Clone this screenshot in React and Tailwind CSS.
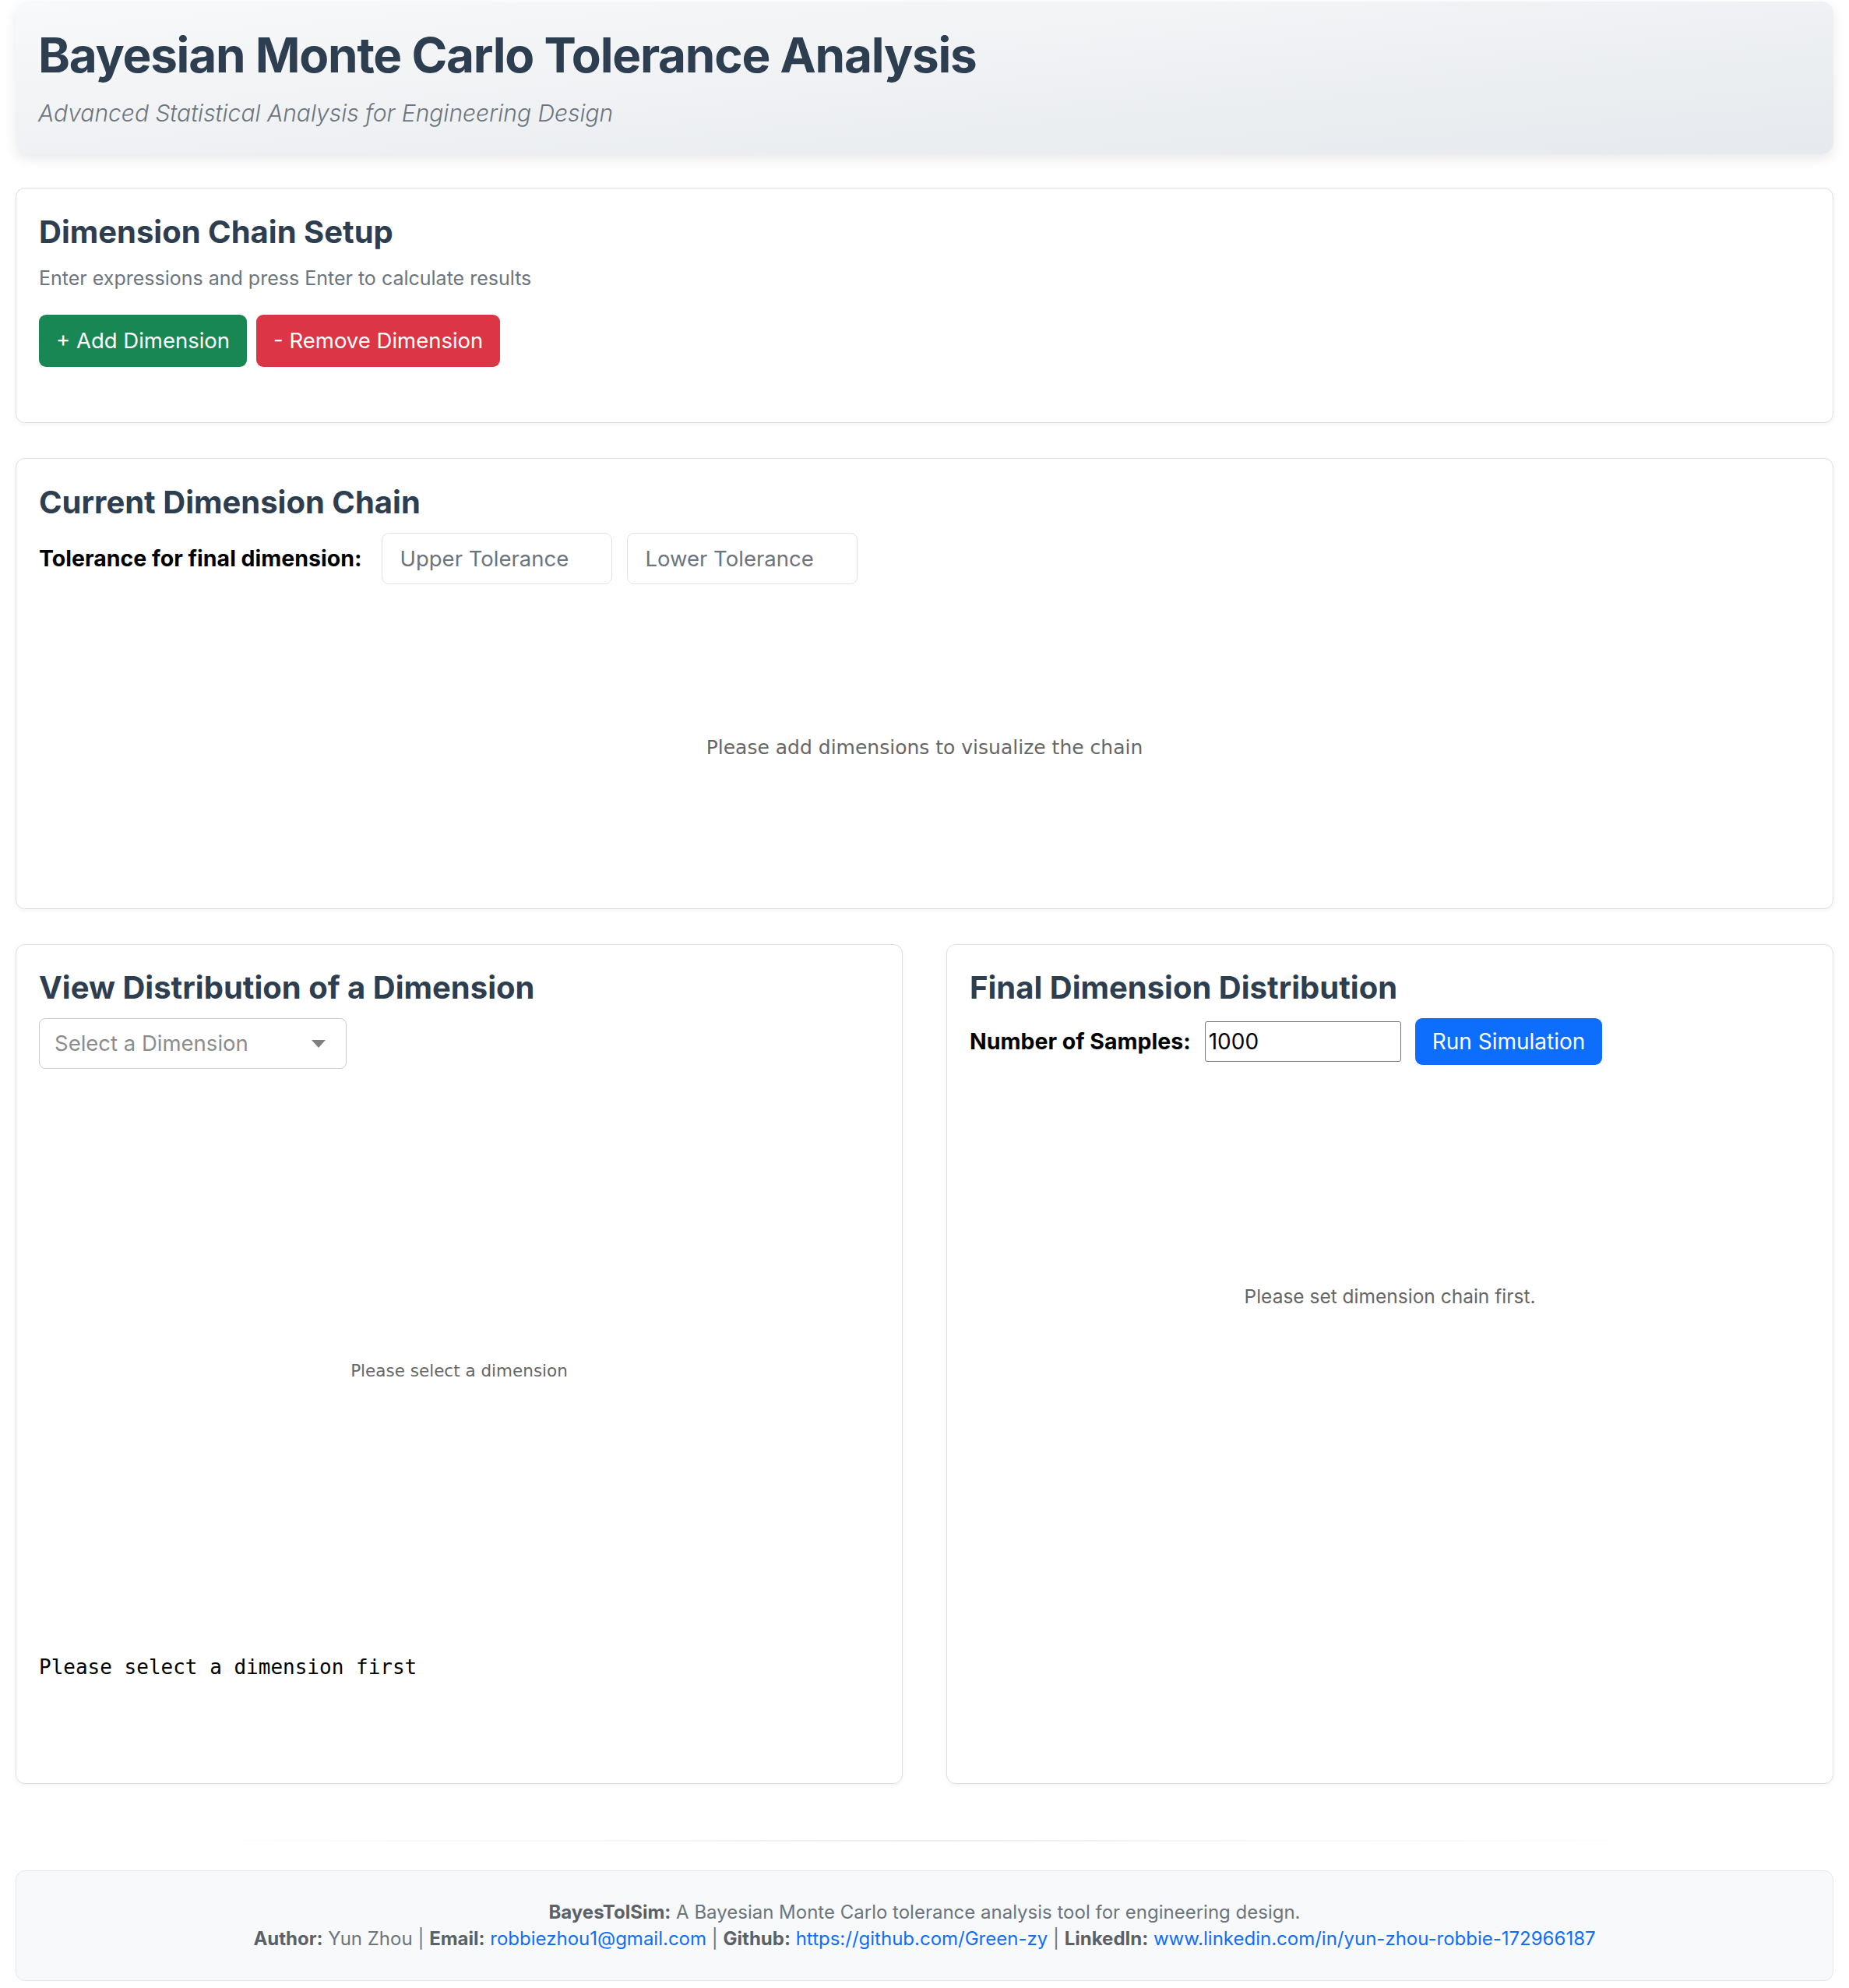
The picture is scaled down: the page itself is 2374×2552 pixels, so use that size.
import { useState } from 'react';

const font = { fontFamily: 'Inter, "Noto Sans", sans-serif' };

function Card({ className = '', children }) {
  return (
    <div className={`bg-white border border-[#dcdfe3] rounded-[12px] shadow-[0_2px_6px_rgba(0,0,0,0.05)] px-[29px] ${className}`}>
      {children}
    </div>
  );
}

function Heading({ children }) {
  return (
    <h3 className="text-[40px] leading-[48px] font-bold text-[#2c3e50]">{children}</h3>
  );
}

export default function App() {
  const [samples, setSamples] = useState('1000');
  const [upper, setUpper] = useState('');
  const [lower, setLower] = useState('');

  return (
    <div className="min-h-screen bg-white px-[20px] pt-[2px] pb-[10px] text-[#212529]" style={font}>
      {/* header */}
      <div className="rounded-[15px] bg-gradient-to-br from-[#f8f9fa] to-[#e6e9ed] shadow-[0_6px_16px_rgba(0,0,0,0.09)] px-[29px] pt-[32px] pb-[30px]">
        <h1 className="text-[62px] leading-[74px] font-bold text-[#2c3e50] tracking-[-0.02em]">Bayesian Monte Carlo Tolerance Analysis</h1>
        <p className="mt-[15px] text-[30px] leading-[45px] italic font-light text-[#6c757d]">Advanced Statistical Analysis for Engineering Design</p>
      </div>

      {/* setup */}
      <Card className="mt-[43px] pt-[32px] pb-[71px]">
        <Heading>Dimension Chain Setup</Heading>
        <p className="mt-[17px] text-[25px] leading-[36px] text-[#6c757d]">Enter expressions and press Enter to calculate results</p>
        <div className="mt-[29px] flex gap-[12px]">
          <button className="h-[67px] px-[22px] rounded-[9px] bg-[#198754] text-white text-[27.5px]">+ Add Dimension</button>
          <button className="h-[67px] px-[22px] rounded-[9px] bg-[#dc3545] text-white text-[27.5px]">- Remove Dimension</button>
        </div>
      </Card>

      {/* current chain */}
      <Card className="mt-[45px] pt-[32px] pb-[16px]">
        <Heading>Current Dimension Chain</Heading>
        <div className="mt-[15px] flex items-center gap-[19px]">
          <span className="text-[28.5px] font-bold text-black mr-[7px]">Tolerance for final dimension:</span>
          <input
            value={upper}
            onChange={e => setUpper(e.target.value)}
            placeholder="Upper Tolerance"
            className="w-[296px] h-[66px] px-[22px] border border-[#dee2e6] rounded-[9px] text-[27.5px] placeholder:text-[#6c757d] outline-none"
          />
          <input
            value={lower}
            onChange={e => setLower(e.target.value)}
            placeholder="Lower Tolerance"
            className="w-[296px] h-[66px] px-[22px] border border-[#dee2e6] rounded-[9px] text-[27.5px] placeholder:text-[#6c757d] outline-none"
          />
        </div>
        <div className="mt-[20px] h-[380px] flex items-center justify-center">
          <span className="text-[25px] text-[#666]" style={{ fontFamily: '"DejaVu Sans", sans-serif' }}>Please add dimensions to visualize the chain</span>
        </div>
      </Card>

      {/* distributions */}
      <div className="mt-[45px] grid grid-cols-2 gap-[56px]">
        <Card className="pt-[31px] h-[1078px] flex flex-col">
          <Heading>View Distribution of a Dimension</Heading>
          <div className="mt-[15px] w-[395px] h-[65px] border border-[#cccccc] rounded-[8px] flex items-center justify-between pl-[19px] pr-[26px]">
            <span className="text-[27.5px] text-[#8c8c8c]">Select a Dimension</span>
            <svg width="18" height="10" viewBox="0 0 18 10"><path d="M0 0 L18 0 L9 10 Z" fill="#808080" /></svg>
          </div>
          <div className="h-[404px] flex items-end justify-center">
            <span className="text-[21.5px] text-[#666]" style={{ fontFamily: '"DejaVu Sans", sans-serif' }}>Please select a dimension</span>
          </div>
          <pre className="mt-[346px] text-[26px] leading-[36px] text-black" style={{ fontFamily: '"DejaVu Sans Mono", monospace' }}>Please select a dimension first</pre>
        </Card>

        <Card className="pt-[31px] h-[1078px] flex flex-col">
          <Heading>Final Dimension Distribution</Heading>
          <div className="mt-[15px] flex items-center h-[60px]">
            <span className="text-[28.5px] font-bold text-black mr-[18px]">Number of Samples:</span>
            <input
              value={samples}
              onChange={e => setSamples(e.target.value)}
              className="w-[252px] h-[52px] px-[4px] border border-[#767676] rounded-[3px] text-[28px] text-black outline-none"
            />
            <button className="ml-[18px] h-[60px] px-[22px] rounded-[9px] bg-[#0d6efd] text-white text-[28px]">Run Simulation</button>
          </div>
          <div className="h-[594px] flex items-center justify-center">
            <span className="text-[24.5px] text-[#666]">Please set dimension chain first.</span>
          </div>
        </Card>
      </div>

      <div className="mt-[72px] mx-[205px] h-[2px] bg-gradient-to-r from-transparent via-[#eceef0] to-transparent" />

      {/* footer */}
      <footer className="mt-[37px] bg-[#f8f9fa] border border-[#e3e6e9] rounded-[12px] h-[142px] flex flex-col items-center justify-center text-[24px] leading-[34px] text-[#6c757d]">
        <p><strong className="font-bold text-[#5a6169]">BayesTolSim:</strong> A Bayesian Monte Carlo tolerance analysis tool for engineering design.</p>
        <p>
          <strong className="font-bold text-[#5a6169]">Author:</strong> Yun Zhou | <strong className="font-bold text-[#5a6169]">Email:</strong>{' '}
          <a href="#" className="text-[#0d6efd]">robbiezhou1@gmail.com</a> | <strong className="font-bold text-[#5a6169]">Github:</strong>{' '}
          <a href="#" className="text-[#0d6efd]">https://github.com/Green-zy</a> | <strong className="font-bold text-[#5a6169]">LinkedIn:</strong>{' '}
          <a href="#" className="text-[#0d6efd]">www.linkedin.com/in/yun-zhou-robbie-172966187</a>
        </p>
      </footer>
    </div>
  );
}
